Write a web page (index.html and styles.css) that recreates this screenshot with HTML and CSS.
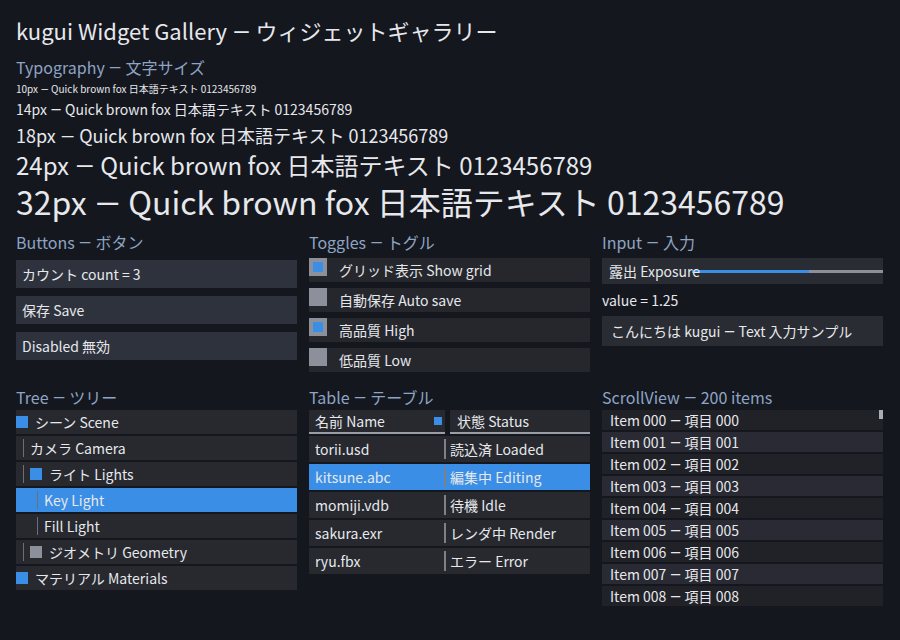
FILE: index.html
```html
<!DOCTYPE html>
<html lang="ja">

<head>
    <meta charset="UTF-8">
    <meta name="viewport" content="width=device-width, initial-scale=1.0">
    <title>kugui Widget Gallery</title>
    <link rel="stylesheet" href="styles.css">
</head>

<body>
    <h1 class="title">kugui Widget Gallery <span class="dash">—</span> ウィジェットギャラリー</h1>

    <section class="typo">
        <h2 class="head">Typography <span class="dash">—</span> 文字サイズ</h2>
        <p class="s10">10px <span class="dash">—</span> Quick brown fox 日本語テキスト 0123456789</p>
        <p class="s14">14px <span class="dash">—</span> Quick brown fox 日本語テキスト 0123456789</p>
        <p class="s18">18px <span class="dash">—</span> Quick brown fox 日本語テキスト 0123456789</p>
        <p class="s24">24px <span class="dash">—</span> Quick brown fox 日本語テキスト 0123456789</p>
        <p class="s32">32px <span class="dash">—</span> Quick brown fox 日本語テキスト 0123456789</p>
    </section>

    <div class="grid">
        <section>
            <h2 class="head">Buttons <span class="dash">—</span> ボタン</h2>
            <div class="buttons">
                <div class="btn">カウント count = 3</div>
                <div class="btn">保存 Save</div>
                <div class="btn">Disabled 無効</div>
            </div>
        </section>

        <section>
            <h2 class="head">Toggles <span class="dash">—</span> トグル</h2>
            <div class="toggles">
                <div class="toggle on"><span class="box"></span>グリッド表示 Show grid</div>
                <div class="toggle"><span class="box"></span>自動保存 Auto save</div>
                <div class="toggle on"><span class="box"></span>高品質 High</div>
                <div class="toggle"><span class="box"></span>低品質 Low</div>
            </div>
        </section>

        <section>
            <h2 class="head">Input <span class="dash">—</span> 入力</h2>
            <div class="slider">
                <span class="slider-label">露出 Exposure</span>
                <div class="track"><div class="fill" style="width: 61%"></div></div>
            </div>
            <div class="value">value = 1.25</div>
            <div class="textbox">こんにちは kugui <span class="dash">—</span> Text 入力サンプル</div>
        </section>

        <section class="lower">
            <h2 class="head">Tree <span class="dash">—</span> ツリー</h2>
            <div class="tree">
                <div class="node"><span class="icon"></span>シーン Scene</div>
                <div class="node d1"><span class="guide"></span>カメラ Camera</div>
                <div class="node d1"><span class="guide"></span><span class="icon"></span>ライト Lights</div>
                <div class="node d2 selected"><span class="guide"></span>Key Light</div>
                <div class="node d2"><span class="guide"></span>Fill Light</div>
                <div class="node d1"><span class="guide"></span><span class="icon closed"></span>ジオメトリ Geometry</div>
                <div class="node"><span class="icon"></span>マテリアル Materials</div>
            </div>
        </section>

        <section class="lower">
            <h2 class="head">Table <span class="dash">—</span> テーブル</h2>
            <div class="table">
                <div class="thead">
                    <div class="th first">名前 Name<span class="sort"></span></div>
                    <div class="th">状態 Status</div>
                </div>
                <div class="tr"><div class="td">torii.usd</div><div class="td second">読込済 Loaded</div></div>
                <div class="tr selected"><div class="td">kitsune.abc</div><div class="td second">編集中 Editing</div></div>
                <div class="tr"><div class="td">momiji.vdb</div><div class="td second">待機 Idle</div></div>
                <div class="tr"><div class="td">sakura.exr</div><div class="td second">レンダ中 Render</div></div>
                <div class="tr"><div class="td">ryu.fbx</div><div class="td second">エラー Error</div></div>
            </div>
        </section>

        <section class="lower">
            <h2 class="head">ScrollView <span class="dash">—</span> 200 items</h2>
            <div class="scroll">
                <div class="thumb"></div>
                <div id="items"></div>
            </div>
        </section>
    </div>

    <script>
        // only the rows inside the viewport are built (200 in total)
        const total = 200;
        const visible = 9;
        let list = document.getElementById("items");
        for (let i = 0; i < Math.min(total, visible); i++) {
            let n = String(i).padStart(3, "0");
            let row = document.createElement("div");
            row.className = "item";
            row.innerHTML = `Item ${n} <span class="dash">—</span> 項目 ${n}`;
            list.appendChild(row);
        }
    </script>
</body>

</html>
```

FILE: styles.css
```css
body {
    margin: 0;
    padding: 15px 16px 0 16px;
    background-color: #15171e;
    color: #e6e8ec;
    font-family: "Noto Sans CJK JP", "Noto Sans", sans-serif;
    font-size: 14px;
}

h1,
h2,
p {
    margin: 0;
    font-weight: normal;
}

/* the em dash is narrower than the full-width CJK one */
.dash {
    font-family: Roboto, sans-serif;
    line-height: 0;
    padding: 0 0.035em;
}

.title {
    font-size: 22px;
    line-height: 30px;
}

.head {
    color: #8da4c4;
    font-size: 16px;
    line-height: 20px;
}

.typo .head {
    margin-top: 12px;
}

.s10 {
    font-size: 10px;
    line-height: 14px;
    margin-top: 5px;
}

.s14 {
    font-size: 14px;
    line-height: 20px;
    margin-top: 3px;
}

.s18 {
    font-size: 18px;
    line-height: 24px;
    margin-top: 4px;
}

.s24 {
    font-size: 24px;
    line-height: 30px;
    margin-top: 3px;
}

.s32 {
    font-size: 32px;
    line-height: 40px;
    margin-top: 1px;
}

.grid {
    display: grid;
    grid-template-columns: 281px 281px 281px;
    column-gap: 12px;
    row-gap: 15px;
    margin-top: 11px;
}

.grid .head {
    margin-bottom: 6px;
}

.grid .lower .head {
    margin-bottom: 3px;
}

/* buttons */
.buttons {
    display: flex;
    flex-direction: column;
    gap: 8px;
    padding-top: 2px;
}

.btn {
    height: 28px;
    line-height: 28px;
    padding-left: 6px;
    background-color: #2e323c;
}

/* toggles */
.toggles {
    display: flex;
    flex-direction: column;
    gap: 6px;
}

.toggle {
    height: 24px;
    display: flex;
    align-items: center;
    background-color: #25272d;
}

.box {
    width: 18px;
    height: 18px;
    align-self: flex-start;
    margin-right: 12px;
    background-color: #8b909a;
    display: flex;
    justify-content: center;
    align-items: center;
}

.toggle.on .box::after {
    content: "";
    width: 10px;
    height: 10px;
    background-color: #3a8ee6;
}

/* input */
.slider {
    height: 26px;
    display: flex;
    align-items: center;
    background-color: #2a2c33;
}

.slider-label {
    position: relative;
    z-index: 1;
    width: 90px;
    flex: none;
    box-sizing: border-box;
    padding-left: 7px;
    white-space: nowrap;
}

.track {
    flex: 1;
    height: 3px;
    background-color: #8b909a;
}

.fill {
    height: 3px;
    background-color: #3a8ee6;
}

.value {
    line-height: 20px;
    margin-top: 6px;
}

.textbox {
    height: 30px;
    line-height: 30px;
    margin-top: 6px;
    padding-left: 9px;
    background-color: #2a2c33;
}

/* tree */
.tree {
    display: flex;
    flex-direction: column;
    gap: 2px;
}

.node {
    height: 24px;
    display: flex;
    align-items: center;
    background-color: #27292f;
}

.node.selected {
    background-color: #3a8ee6;
}

.guide {
    width: 1px;
    height: 18px;
    margin-right: 6px;
    background-color: #6b6f78;
}

.d1 .guide {
    margin-left: 7px;
}

.d2 .guide {
    margin-left: 21px;
}

.icon {
    width: 12px;
    height: 12px;
    margin-right: 7px;
    background-color: #3a8ee6;
}

.icon.closed {
    background-color: #8b909a;
}

/* table */
.table {
    display: flex;
    flex-direction: column;
    gap: 2px;
}

.thead {
    display: flex;
    gap: 5px;
    height: 24px;
}

.th {
    flex: 1;
    display: flex;
    align-items: center;
    padding-left: 7px;
    background-color: #27292f;
    border-bottom: 2px solid #9a9ea6;
}

.th.first {
    flex: none;
    width: 130px;
    padding-left: 6px;
}

.sort {
    width: 8px;
    height: 8px;
    margin-left: auto;
    margin-right: 3px;
    background-color: #3a8ee6;
}

.tr {
    height: 26px;
    display: flex;
    align-items: center;
    background-color: #27292f;
}

.tr.selected {
    background-color: #3a8ee6;
}

.td {
    width: 129px;
    padding-left: 6px;
}

.td.second {
    width: auto;
    border-left: 2px solid #7c8088;
    padding-left: 4px;
    line-height: 20px;
}

/* scroll view */
.scroll {
    position: relative;
    height: 196px;
    overflow: hidden;
}

.thumb {
    position: absolute;
    top: 0;
    right: 0;
    width: 4px;
    height: 9px;
    background-color: #a9adb5;
}

.item {
    height: 20px;
    line-height: 20px;
    margin-bottom: 2px;
    padding-left: 8px;
    background-color: #212228;
}

.item:nth-child(even) {
    background-color: #292a33;
}
```
